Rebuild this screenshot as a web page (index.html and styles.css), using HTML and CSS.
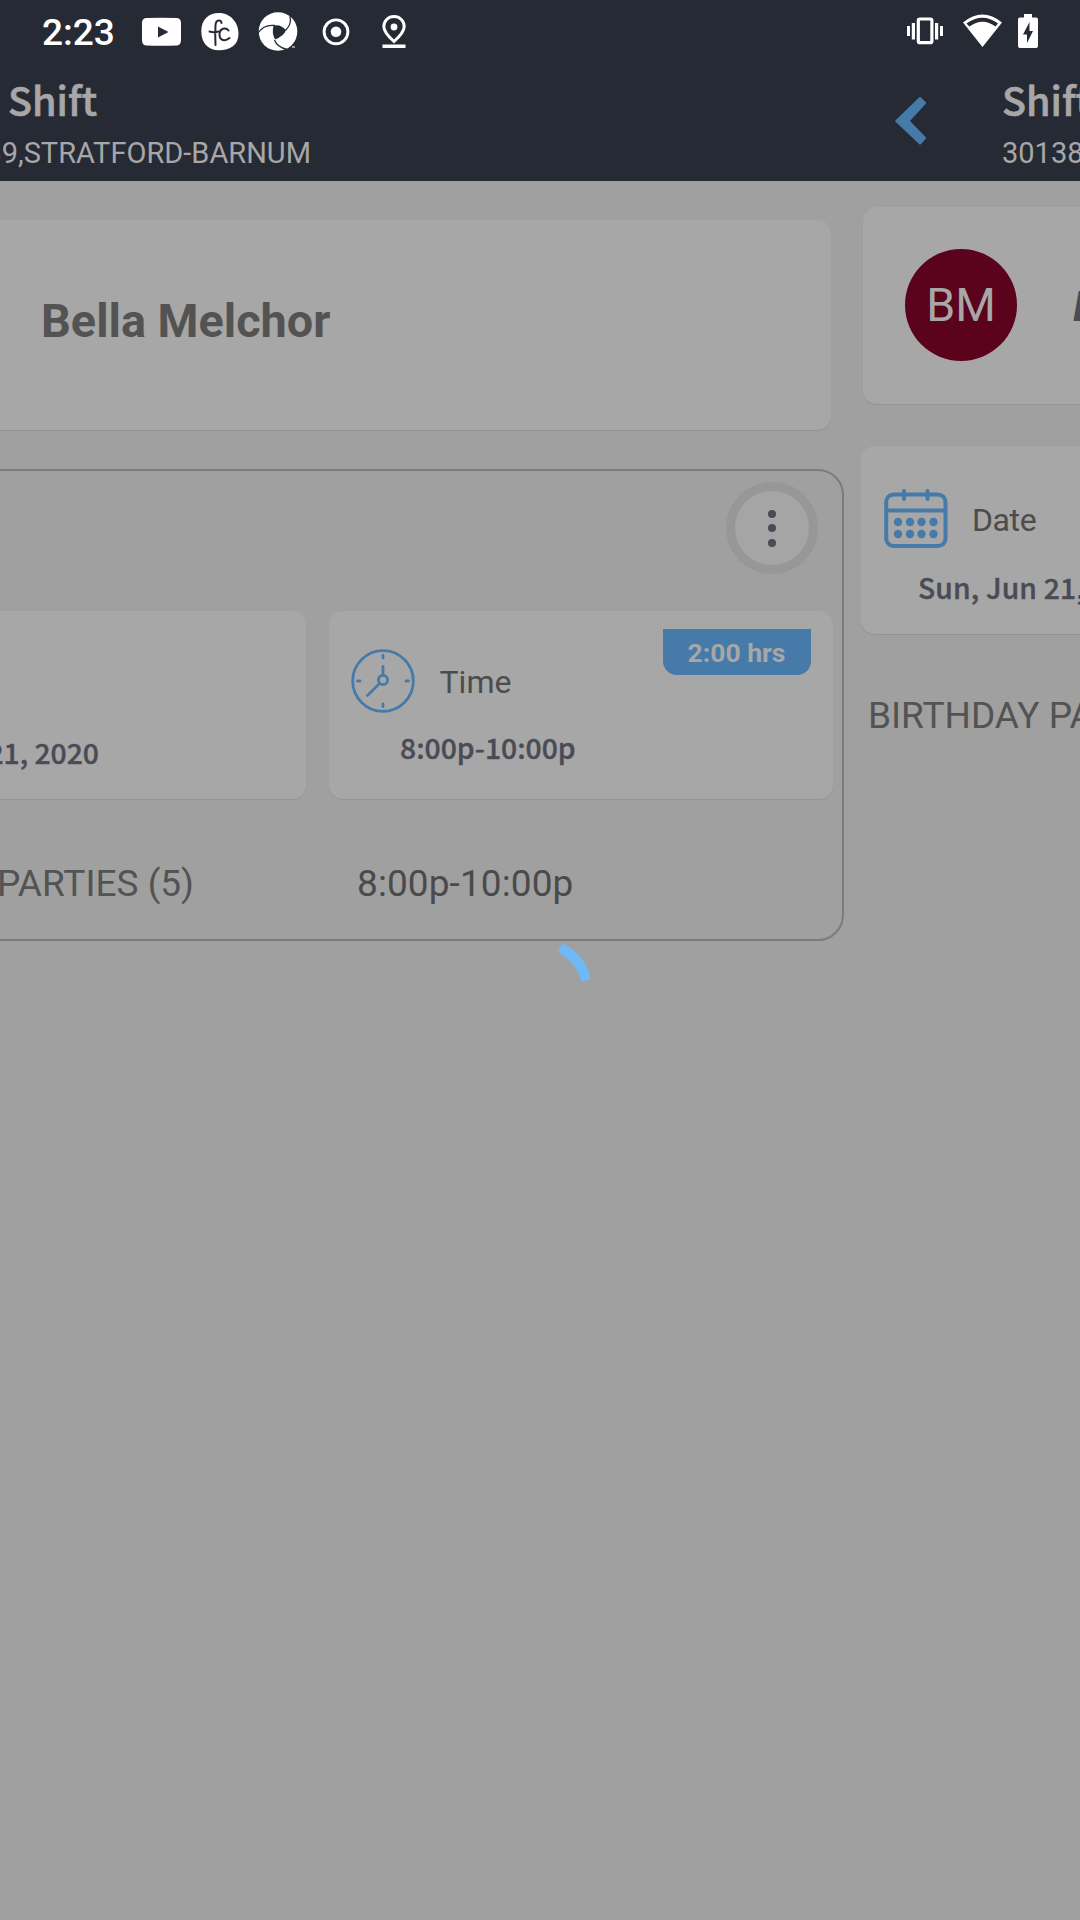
FILE: index.html
```html
<!DOCTYPE html>
<html lang="en">
<head>
<meta charset="utf-8">
<title>Shift</title>
<link rel="stylesheet" href="styles.css">
</head>
<body>
<div class="phone">
  <header class="top">
    <div class="status">
      <span class="clock">2:23</span>
      <svg class="icons-left" width="270" height="62" viewBox="140 0 270 62" fill="#fff">
        <path d="M146 18Q161.500 17.300 177 18Q181 18.500 181 23V40Q181 45 177 45.500Q161.500 46 146 45.500Q142 45 142 40V23Q142 18.500 146 18ZM158 26.500V37.500L168.500 32Z" fill-rule="evenodd"/>
        <path d="M219 13C231 13 238.500 23 238.500 34C238.500 45 230 50.300 219 50.300C207 50.300 201.300 42 201.300 31C201.300 20 208 13 219 13Z"/>
        <g fill="none" stroke="#262a34" stroke-width="2" stroke-linecap="round">
          <path d="M221.500 23C221.500 19.500 216 19 215.500 25Q215 35 215.500 45M209.500 31.500Q214 33 218.500 31.500"/>
          <path d="M228.500 30.500C226 27 219.500 28 219.500 34.500C219.500 41 225.500 41.500 229.500 38"/>
        </g>
        <circle cx="278" cy="31.500" r="19.300"/>
        <path d="M273.500 26Q279.500 23.500 286 30Q284 36 275 39.500Q271.500 33 273.500 26Z" fill="#262a34"/>
        <g fill="none" stroke="#262a34" stroke-width="1.300">
          <path d="M258 33Q264 24 275 25.500"/><path d="M290 16Q292 24 285.500 30.500"/><path d="M274.500 40Q277 47 287 49.500"/>
        </g>
        <path d="M292 47h3" stroke="#fff" stroke-width="1"/>
        <circle cx="336" cy="31.800" r="11.900" fill="none" stroke="#fff" stroke-width="2.900"/><circle cx="336" cy="31.800" r="5.300"/>
        <path d="M394 16.500C400 16.500 404.200 21 404.200 26.500C404.200 32 399 37 394 41.500C389 37 383.800 32 383.800 26.500C383.800 21 388 16.500 394 16.500Z" fill="none" stroke="#fff" stroke-width="3"/>
        <circle cx="394" cy="27" r="3.400"/><path d="M382.500 44.500h23v3.500h-23z"/>
      </svg>
      <svg class="icons-right" width="140" height="62" viewBox="900 0 140 62" fill="#fff">
        <rect x="918.300" y="19" width="13.600" height="23.700" rx="1.500" fill="none" stroke="#fff" stroke-width="3.200"/>
        <path d="M907 26h3v10h-3zM911.800 23h3.200v16.500h-3.200zM935 23h3.200v16.500h-3.200zM940 26h3v10h-3z"/>
        <path d="M963 22.500Q982.500 6.500 1002 22.500L982.500 47ZM966.500 23.500L969.500 26.500Q982.500 17 995.500 26.500L998 23.500Q982.500 12 966.500 23.500Z" fill-rule="evenodd"/>
        <path d="M1024 14h8v3.500h4q2 0 2 2V46q0 2-2 2h-16q-2 0-2-2V19.500q0-2 2-2h4zM1029.500 22L1023 34.500H1027V43L1033 31H1029.500Z" fill-rule="evenodd"/>
      </svg>
    </div>
    <div class="bars">
      <div class="bar bar-out">
        <h1 class="title">Shift</h1>
        <p class="store">301389,STRATFORD-BARNUM</p>
      </div>
      <div class="bar bar-in">
        <svg class="back" width="32" height="50" viewBox="0 0 32 50"><path d="M24 1.500Q25 .500 26 1.500L30.500 6Q31.500 7 30.500 8L15 25L30.500 41Q31.500 42 30.500 43L26 48Q25 49 24 48L.800 26Q-.300 25 .800 24Z" fill="#467aa8"/></svg>
        <div class="names">
          <h1 class="title">Shift</h1>
          <p class="store">301389,STRATFORD-BARNUM</p>
        </div>
      </div>
    </div>
  </header>
  <main class="screens">
    <section class="screen-out">
      <div class="card person"><h2 class="person-name">Bella Melchor</h2></div>
      <div class="panel">
        <button class="more" aria-label="More"><i></i><i></i><i></i></button>
        <div class="tiles">
          <div class="card tile-date"><p class="value">Sun, Jun 21, 2020</p></div>
          <div class="card tile-time">
            <div class="tile-head">
              <svg width="64" height="64" viewBox="0 0 64 64" fill="none" stroke="#467aa8" stroke-width="2.800" stroke-linecap="round">
                <circle cx="32" cy="32" r="30.300"/><circle cx="32" cy="31" r="4.600"/>
                <path d="M32 26V17.500M28.500 34.500L16.500 46.500M32 6.500v2.500M32 55v2.500M6.500 32h2.500M55 32h2.500"/>
              </svg>
              <span class="label">Time</span>
              <span class="hours">2:00 hrs</span>
            </div>
            <p class="value">8:00p-10:00p</p>
          </div>
        </div>
        <div class="job"><span class="job-name">BIRTHDAY PARTIES (5)</span><span class="job-time">8:00p-10:00p</span></div>
      </div>
      <svg class="spinner" width="100" height="100" viewBox="0 0 100 100"><path d="M70.300 7.800A51 51 0 0 1 96.300 40.400" fill="none"/></svg>
    </section>
    <section class="screen-in">
      <div class="card person-in"><span class="avatar">BM</span><h2 class="name-in">Bella Melchor</h2></div>
      <div class="card date-in">
        <div class="date-head">
          <svg width="64" height="62" viewBox="0 0 64 62" fill="none" stroke="#467aa8" stroke-width="4">
            <rect x="2.200" y="6.500" width="59.300" height="51.500" rx="7.500"/>
            <path d="M2 22.500H62"/><path d="M20 3v8M43.500 3v8" stroke-linecap="round"/>
            <g fill="#467aa8" stroke="none"><circle cx="14" cy="34" r="4.200"/><circle cx="26" cy="34" r="4.200"/><circle cx="37.500" cy="34" r="4.200"/><circle cx="49.500" cy="34" r="4.200"/><circle cx="14" cy="46" r="4.200"/><circle cx="26" cy="46" r="4.200"/><circle cx="37.500" cy="46" r="4.200"/><circle cx="49.500" cy="46" r="4.200"/></g>
          </svg>
          <span class="label">Date</span>
        </div>
        <p class="value">Sun, Jun 21, 2020</p>
      </div>
      <p class="job-name job-in">BIRTHDAY PARTIES (5)</p>
    </section>
  </main>
</div>
</body>
</html>
```
FILE: styles.css
```css
* { box-sizing: border-box; margin: 0; padding: 0; }
body { background: #a0a0a0; font-family: Roboto, sans-serif; }
svg { flex-shrink: 0; }
.phone { width: 1080px; height: 1920px; overflow: hidden; display: flex; flex-direction: column; background: #a0a0a0; white-space: nowrap; }
.top { height: 181px; background: #262a34; color: #a7a7a7; }
.status { display: flex; height: 62px; padding: 0 40px 0 42px; }
.clock { width: 98px; color: #fff; font-size: 37px; font-weight: 500; line-height: 66px; }
.icons-right { margin-left: auto; }
.bars { display: flex; height: 119px; }
.bar-out { width: 857px; display: flex; flex-direction: column; }
.bar-in { width: 223px; display: flex; padding-left: 38px; }
.back { margin-top: 34px; }
.names { margin-left: 75px; }
.title { height: 60px; font: 500 39.500px/74px "Noto Sans CJK SC", sans-serif; -webkit-text-stroke: .6px; }
.bar-out .title { margin-left: 8px; }
.store { font-size: 29px; line-height: 62px; }
.bar-out .store { width: 311px; display: flex; justify-content: flex-end; }
.screens { display: flex; flex: 1; }
.screen-out { width: 857px; }
.screen-in { width: 223px; overflow: hidden; border-left: 1px solid #9e9e9e; }
.card { background: #a7a7a7; border-radius: 14px; box-shadow: 0 1px 1px 0 #949494; }
.person { width: 851px; height: 210px; margin: 39px 0 0 -20px; padding-left: 61px; }
.person-name { font-size: 46.800px; line-height: 202px; color: #535353; }
.panel { width: 874px; height: 472px; margin: 39px 0 0 -30px; border: 2px solid #7c7c7c; border-radius: 26px; }
.more { display: flex; flex-direction: column; align-items: center; justify-content: center; gap: 6.500px; width: 92px; height: 92px; margin: 11px 0 0 754px; border: 9px solid #979797; border-radius: 50%; background: #a5a5a5; }
.more i { width: 8px; height: 8px; border-radius: 50%; background: #4a4b54; }
.tiles { display: flex; gap: 22.500px; margin: 37px 0 0 8px; }
.tile-date { width: 326px; height: 188px; padding-top: 112px; }
.tile-date .value { width: 119px; display: flex; justify-content: flex-end; }
.tile-time { width: 504px; height: 188px; padding-left: 22px; }
.tile-time .value { margin-left: 49.500px; }
.value { height: 50px; font: 500 28.300px/58px "Noto Sans CJK SC", sans-serif; color: #4a4b54; -webkit-text-stroke: .4px; }
.tile-head { display: flex; height: 107px; padding: 18px 22px 0 0; }
.tile-head svg { margin-top: 20px; }
.label { font-size: 32px; color: #4c4c4c; }
.tile-head .label { margin: 34px 0 0 25px; }
.hours { width: 148px; height: 46px; margin-left: auto; border-radius: 0 0 14px 14px; background: #467aa8; color: #a7a7a7; font-size: 26.500px; font-weight: 700; line-height: 48px; text-align: center; }
.job { display: flex; padding-top: 59px; }
.job-name, .job-time { font-size: 37px; line-height: 52px; color: #535353; }
.job-name { display: flex; justify-content: flex-end; width: 222px; }
.job-time { margin-left: 163px; color: #4a4a4a; letter-spacing: .1px; }
.spinner { position: absolute; left: 490px; top: 940px; stroke: #6eb9f8; stroke-width: 10; }
.person-in { display: flex; align-items: center; width: 600px; height: 197px; margin: 26px 0 0 5px; padding-left: 42px; }
.avatar { flex-shrink: 0; width: 112px; height: 112px; margin-bottom: 1px; border-radius: 50%; background: #5b021d; color: #a7a7a7; font-size: 46.500px; line-height: 113px; text-align: center; }
.name-in { margin-left: 56px; font-size: 43px; font-style: italic; color: #4a4b54; }
.date-in { width: 504px; height: 188px; margin: 42px 0 0 3px; padding: 42px 0 0 23px; }
.date-head { display: flex; height: 70px; }
.date-head .label { margin: 13px 0 0 24px; letter-spacing: -.4px; }
.date-in .value { margin-left: 34px; letter-spacing: .15px; }
.job-in { justify-content: flex-start; margin: 56px 0 0 10px; }
```
